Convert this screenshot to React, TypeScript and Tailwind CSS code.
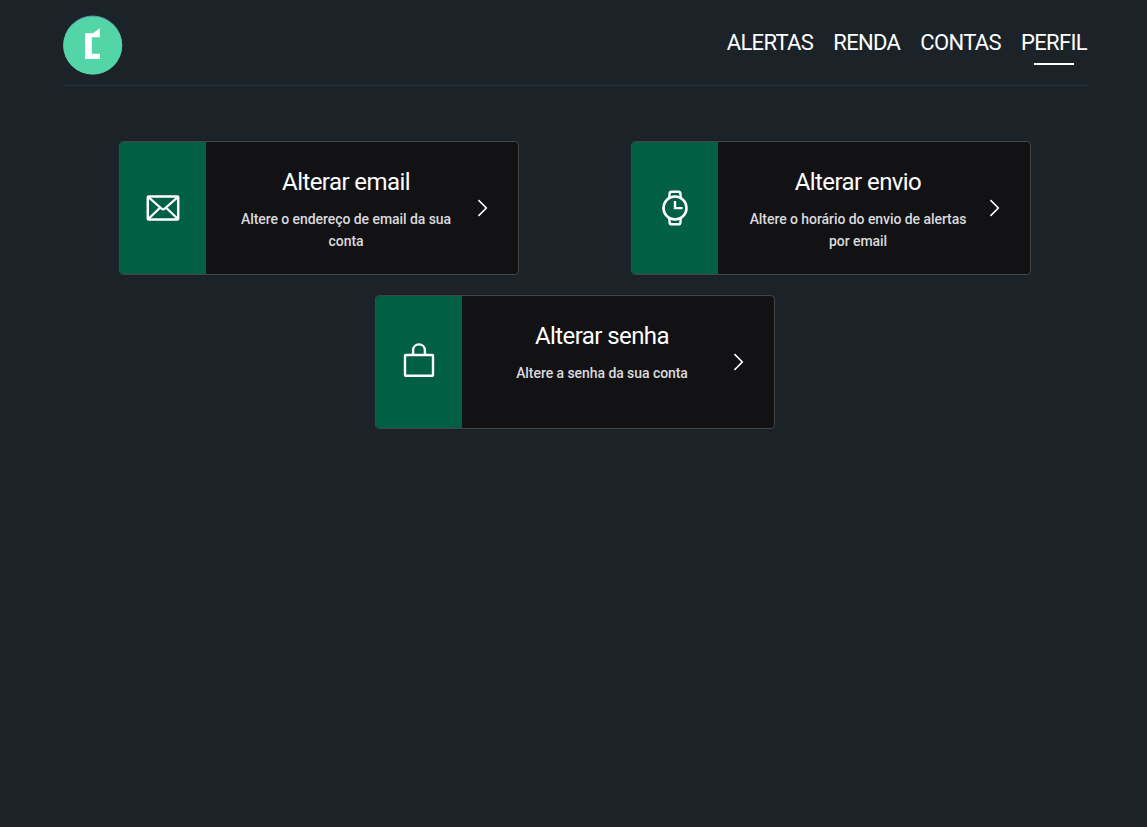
import type { ReactNode } from "react";

const navItems = [
  { label: "ALERTAS", active: false },
  { label: "RENDA", active: false },
  { label: "CONTAS", active: false },
  { label: "PERFIL", active: true },
];

function Logo() {
  return (
    <svg width="60" height="60" viewBox="0 0 60 60" aria-hidden="true">
      <circle cx="29.7" cy="30" r="29.5" fill="#4b8f9b" />
      <ellipse cx="29.7" cy="30.5" rx="29.5" ry="29" fill="#53d5a8" />
      <path d="M22 18.3H30L37 13V22.3H28.8V38.8H37V44H22Z" fill="#fff" />
    </svg>
  );
}

function MailIcon() {
  return (
    <svg width="40" height="40" viewBox="0 0 40 40" fill="none" stroke="#fff" strokeWidth="2.5" strokeLinejoin="round">
      <rect x="4.8" y="8.4" width="30.4" height="23.1" rx="0.8" />
      <path d="M5.3 9L18.5 20.6Q20.1 22 21.7 20.6L34.9 9M5.3 31L16.8 20M34.9 31L23.4 20" strokeWidth="2.3" />
    </svg>
  );
}

function WatchIcon() {
  return (
    <svg width="40" height="40" viewBox="0 0 40 40" fill="none" stroke="#fff" strokeWidth="2.6" strokeLinejoin="round">
      <circle cx="20" cy="20" r="11.5" />
      <path
        d="M14.3 10.2L14.6 5.5Q14.8 3.7 16.4 3.7H23.6Q25.2 3.7 25.4 5.5L25.7 10.2M14.3 29.8L14.6 34.5Q14.8 36.3 16.4 36.3H23.6Q25.2 36.3 25.4 34.5L25.7 29.8"
        strokeWidth="2.4"
      />
      <path d="M20 13V20.1H27.6" strokeWidth="2.4" strokeLinejoin="miter" />
    </svg>
  );
}

function LockIcon() {
  return (
    <svg width="40" height="40" viewBox="0 0 40 40" fill="none" stroke="#fff" strokeWidth="2.4" strokeLinejoin="round">
      <rect x="6" y="13" width="28" height="20.8" rx="0.7" />
      <path d="M14.1 13V8.2C14.1 4.8 16.7 2.4 20 2.4S25.9 4.8 25.9 8.2V13" />
    </svg>
  );
}

function Chevron() {
  return (
    <svg width="10" height="18" viewBox="0 0 10 18" fill="none" stroke="#fff" strokeWidth="1.6" className="shrink-0">
      <path d="M0.4 1L8.3 9L0.4 17" />
    </svg>
  );
}

function Card({ icon, title, text }: { icon: ReactNode; title: string; text: string }) {
  return (
    <a href="#" className="flex h-[134px] w-[400px] overflow-hidden rounded border border-[#444] bg-[#121214]">
      <div className="flex w-[86px] shrink-0 items-center justify-center bg-[#015f43]">{icon}</div>
      <div className="flex flex-1 items-center px-[30px]">
        <div className="flex h-full w-[220px] flex-col items-center pt-6 text-center">
          <h2 className="text-2xl leading-8 tracking-[-0.58px] text-white">{title}</h2>
          <p className="mt-2.5 text-sm leading-[22px] font-medium tracking-[-0.06px] text-[#dadade]">{text}</p>
        </div>
        <div className="ml-auto flex">
          <Chevron />
        </div>
      </div>
    </a>
  );
}

export default function App() {
  return (
    <div className="min-h-screen bg-[#1b2329] pl-[63px] font-['Roboto',sans-serif]">
      <header className="flex h-[86px] w-[1024px] items-start justify-between border-b border-[#263238] pt-[15px]">
        <Logo />
        <nav className="flex gap-5 pt-[13px]">
          {navItems.map(({ label, active }) => (
            <a key={label} href="#" className="flex flex-col items-center text-[22px] leading-[30px] tracking-[-0.65px] text-white">
              {label}
              {active && <span className="mt-[5px] h-0.5 w-10 bg-white" />}
            </a>
          ))}
        </nav>
      </header>
      <main className="flex w-[1024px] flex-wrap justify-around gap-y-5 pt-[55px]">
        <Card icon={<MailIcon />} title="Alterar email" text="Altere o endereço de email da sua conta" />
        <Card icon={<WatchIcon />} title="Alterar envio" text="Altere o horário do envio de alertas por email" />
        <Card icon={<LockIcon />} title="Alterar senha" text="Altere a senha da sua conta" />
      </main>
    </div>
  );
}
